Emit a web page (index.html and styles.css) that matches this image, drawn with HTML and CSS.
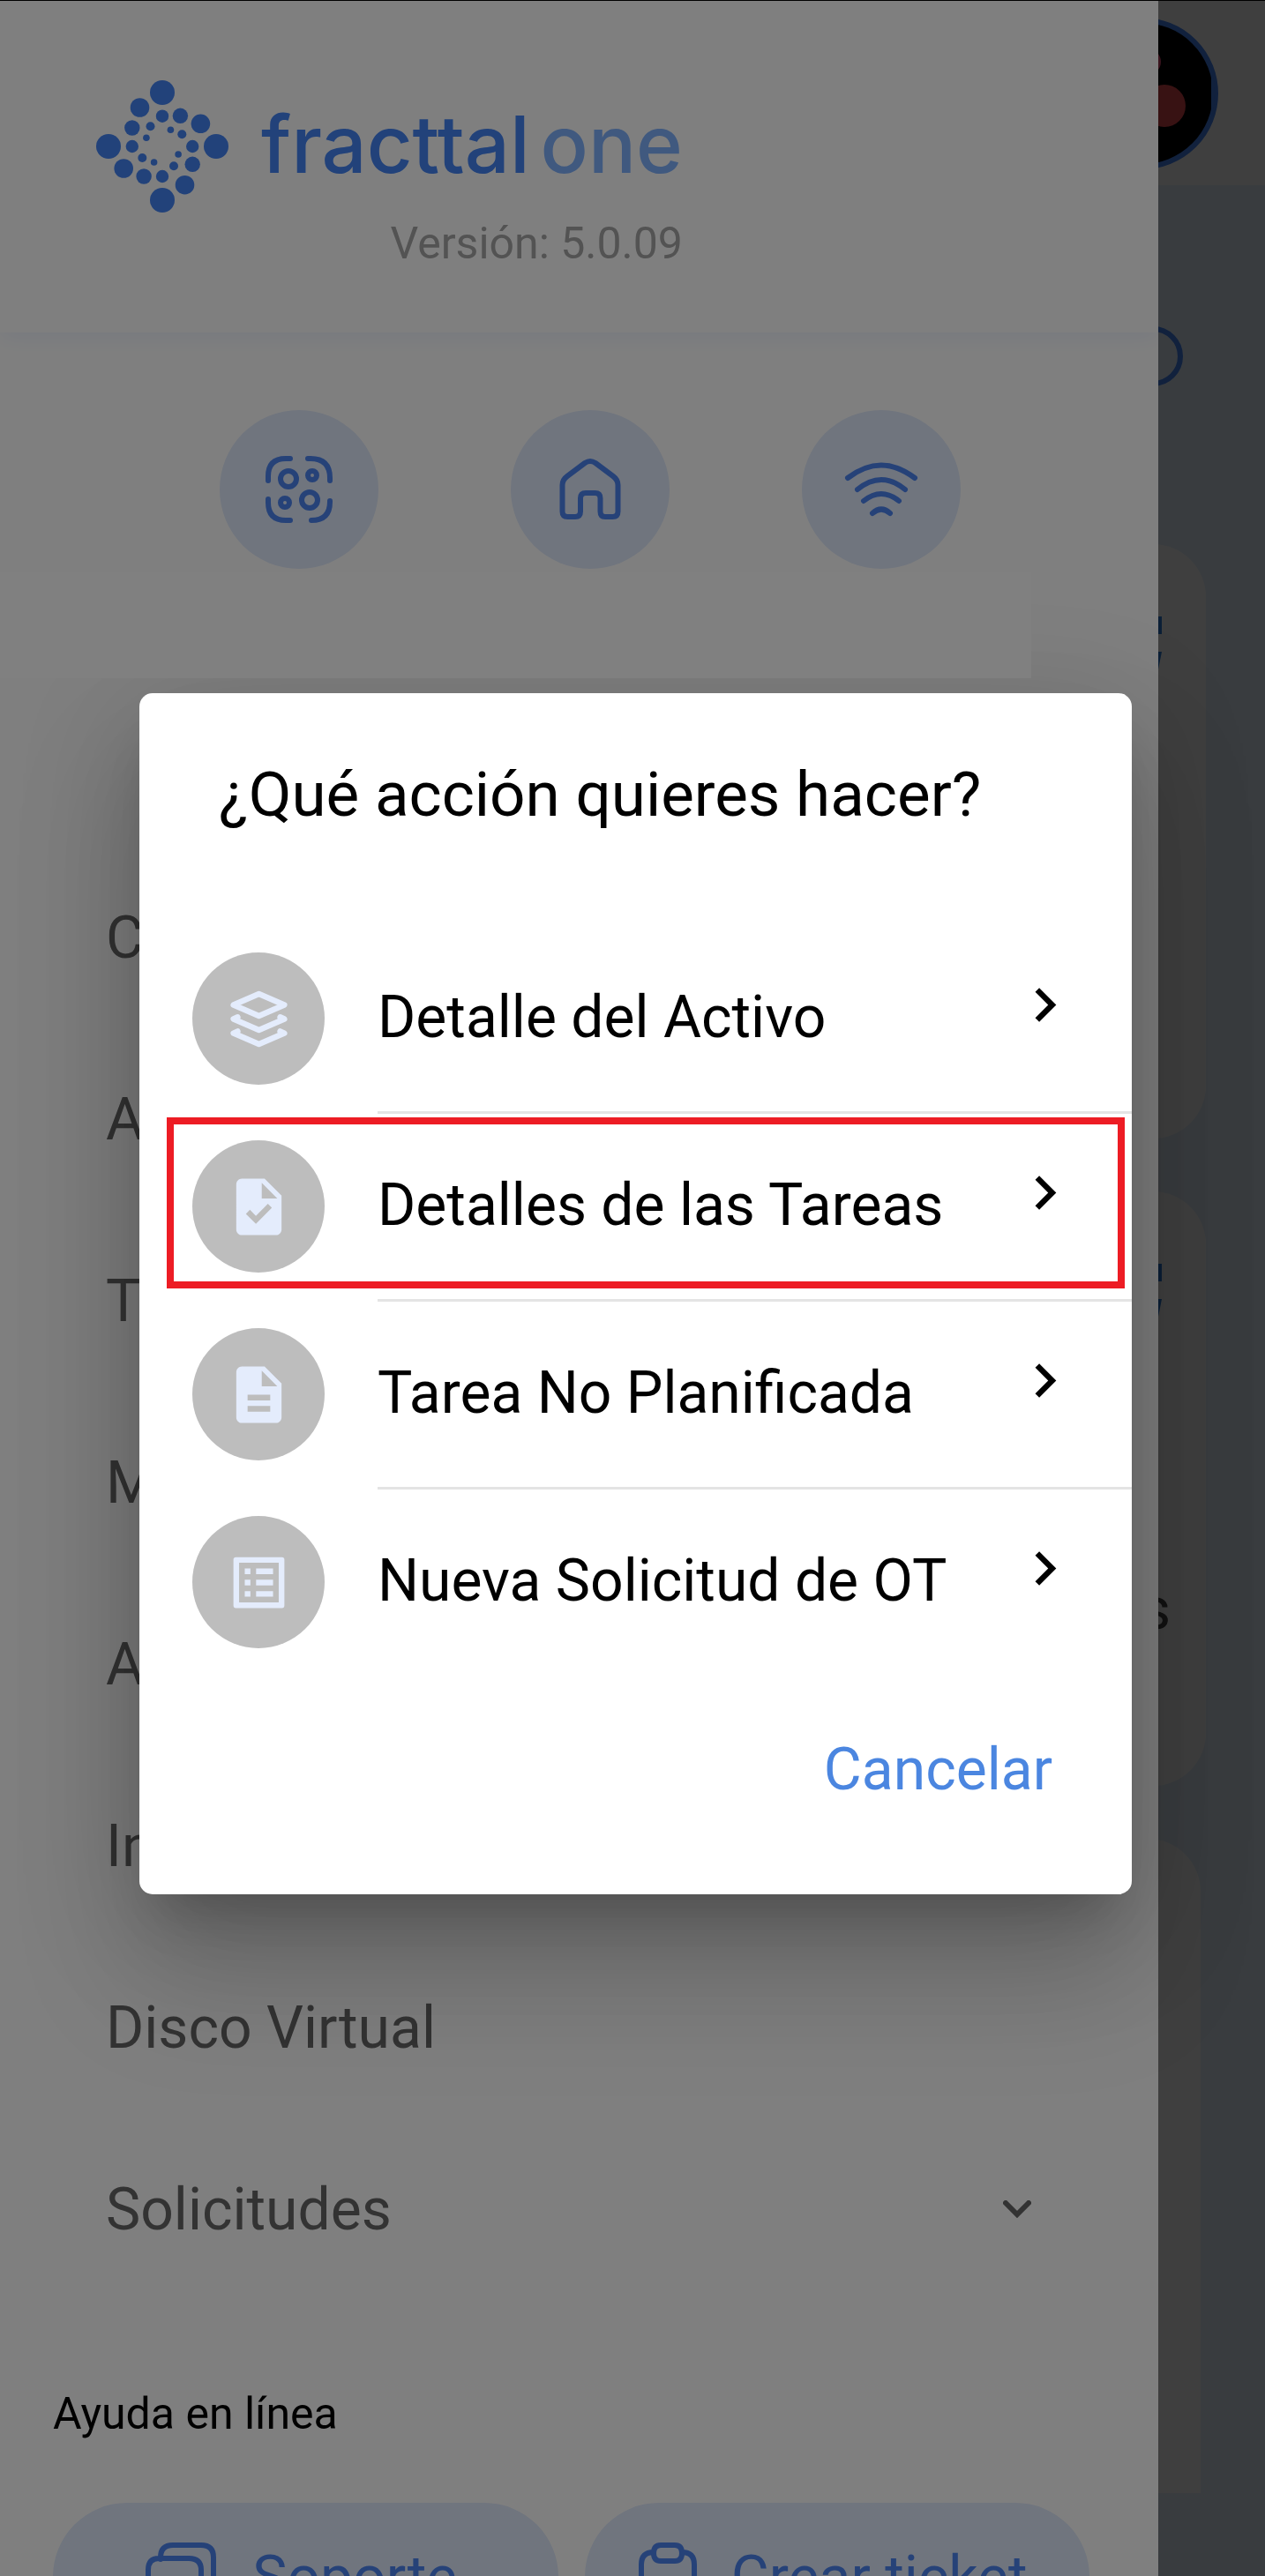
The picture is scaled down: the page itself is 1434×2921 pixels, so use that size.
FILE: index.html
```html
<!doctype html>
<html lang="es">
<head>
	<meta charset="UTF-8">
	<title>Fracttal One</title>
	<link rel="stylesheet" href="styles.css">
</head>
<body>
<div class="app">

	<!-- home -->
	<div class="home">
		<div class="home_top">
			<svg class="avatar" viewBox="0 0 172 172">
				<circle cx="86" cy="86" r="83" fill="#000" stroke="#4484f4" stroke-width="6"/>
				<path d="M164 58Q172 86 164 112Z" fill="#4484f4"/>
				<circle cx="92" cy="50" r="15" fill="#e8507a"/>
				<circle cx="111" cy="100" r="24" fill="#e0484c"/>
			</svg>
		</div>
		<div class="home_body">
			<div class="ring"></div>
			<div class="card">
				<svg class="card_icon" viewBox="0 0 40 60"><path d="M0 0h40v20H0zM0 40h40l-4 20H0z" fill="#2f7fd8"/></svg>
			</div>
			<div class="card">
				<svg class="card_icon" viewBox="0 0 40 60"><path d="M0 0h40v20H0zM0 40h40l-4 20H0z" fill="#2f7fd8"/></svg>
				<p>Pendientes</p>
			</div>
			<div class="card last"></div>
		</div>
	</div>

	<!-- menu -->
	<div class="drawer_box">
		<div class="drawer">
			<div class="drawer_top">
				<div class="logo">
					<svg class="logo_icon" viewBox="108 90 152 152" fill="#4484f4">
						<circle cx="184" cy="105" r="14"/><circle cx="123" cy="166" r="14"/><circle cx="245" cy="166" r="14"/><circle cx="184" cy="227" r="14"/>
						<circle cx="158.500" cy="122" r="10.800"/><circle cx="227.400" cy="140.300" r="10.800"/><circle cx="140.200" cy="191" r="10.800"/><circle cx="209.500" cy="209.700" r="10.800"/>
						<circle cx="204.400" cy="131.300" r="8.700"/><circle cx="149.800" cy="145" r="8.700"/><circle cx="218.200" cy="186.300" r="8.700"/><circle cx="163.100" cy="200" r="8.700"/>
						<circle cx="184" cy="131.700" r="7.200"/><circle cx="149.800" cy="166" r="7.200"/><circle cx="218.200" cy="166" r="7.200"/><circle cx="184" cy="200" r="7.200"/>
						<circle cx="170.500" cy="143.300" r="5"/><circle cx="206.300" cy="152.300" r="5"/><circle cx="161.300" cy="179" r="5"/><circle cx="197" cy="188.300" r="5"/>
						<circle cx="193.400" cy="147.300" r="3.800"/><circle cx="165.900" cy="156.300" r="3.800"/><circle cx="202.100" cy="175" r="3.800"/><circle cx="174.600" cy="184" r="3.800"/>
					</svg>
					<div class="logo_text">
						<div class="logo_name"><b>fracttal</b><span>one</span></div>
						<p>Versión: 5.0.09</p>
					</div>
				</div>
			</div>
			<div class="quick">
				<button type="button" aria-label="Escanear">
					<svg width="80" height="80" viewBox="0 0 80 80">
						<path d="M5 30V25Q5 5 25 5H30M50 5H53Q75 5 75 27V30M5 51V55Q5 75 25 75H30M54 75Q75 75 75 54V53"/>
						<circle cx="28" cy="28" r="9"/><circle cx="55" cy="24" r="5"/><circle cx="24" cy="55" r="5"/><circle cx="52" cy="52" r="9"/>
					</svg>
				</button>
				<button type="button" aria-label="Inicio">
					<svg width="72" height="72" viewBox="0 0 72 72">
						<path d="M30 6Q36 2 42 6L62 21Q67.500 25 67.500 31V61Q67.500 67 61.500 67H53Q47.500 67 47.500 61V46Q47.500 40 41.500 40H31Q25 40 25 46V61Q25 67 19 67H10.500Q4.500 67 4.500 61V31Q4.500 25 10 21Z"/>
					</svg>
				</button>
				<button type="button" aria-label="Conexión">
					<svg width="84" height="64" viewBox="0 0 84 64">
						<path d="M4 19Q42 -10 80 19M15 32Q42 10 69 32M22 45Q42 29 62 45M32 59Q42 50 52 59"/>
					</svg>
				</button>
			</div>
			<ul class="menu">
				<li><a href="#">Catálogos</a></li>
				<li><a href="#">Almacenes</a></li>
				<li><a href="#">Tareas</a></li>
				<li><a href="#">Monitoreo</a></li>
				<li><a href="#">Automatizador</a></li>
				<li><a href="#">Inteligencia</a></li>
				<li><a href="#">Disco Virtual</a></li>
				<li>
					<a href="#">Solicitudes</a>
					<svg width="32" height="20" viewBox="0 0 32 20"><path d="M3 3L16 16 29 3"/></svg>
				</li>
			</ul>
			<h2>Ayuda en línea</h2>
			<div class="help">
				<button type="button">
					<svg width="84" height="80" viewBox="0 0 84 80"><path d="M18 20V18Q18 4 32 4H64Q78 4 78 18V48Q78 60 68 60M16 19H50Q64 19 64 32V60Q64 72 52 72H16Q4 72 4 60V32Q4 19 16 19Z"/></svg>
					Soporte
				</button>
				<button type="button">
					<svg width="68" height="80" viewBox="0 0 68 80"><path d="M18 12Q4 12 4 26V62Q4 76 18 76H50Q64 76 64 62V26Q64 12 50 12M26 4H42Q50 4 50 13 50 22 42 22H26Q18 22 18 13 18 4 26 4Z"/></svg>
					Crear ticket
				</button>
			</div>
		</div>
	</div>

	<!-- dialog -->
	<div class="mask">
		<div class="dialog" role="dialog" aria-labelledby="title">
			<h1 id="title">¿Qué acción quieres hacer?</h1>
			<ul class="actions">
				<li>
					<button type="button">
						<span class="pic">
							<svg class="line" viewBox="0 0 24 24"><path d="M12 3.100L21 7 12 10.900 3 7ZM4.500 11.300L3 12 12 15.900 21 12 19.500 11.300M4.500 16.300L3 17 12 20.900 21 17 19.500 16.300"/></svg>
						</span>
						<span class="name">Detalle del Activo
							<svg class="arrow" viewBox="0 0 24 24"><path d="M10 6L8.590 7.410 13.170 12l-4.580 4.590L10 18l6-6z"/></svg>
						</span>
					</button>
				</li>
				<li class="current">
					<button type="button">
						<span class="pic">
							<svg viewBox="0 0 24 24"><path fill-rule="evenodd" d="M14 2H6c-1.100 0-2 .9-2 2v16c0 1.100.9 2 2 2h12c1.100 0 2-.9 2-2V8l-6-6zM13 3.500V9h5.500zM10.940 18L7.400 14.460l1.410-1.410 2.120 2.120 4.240-4.240 1.410 1.410z"/></svg>
						</span>
						<span class="name">Detalles de las Tareas
							<svg class="arrow" viewBox="0 0 24 24"><path d="M10 6L8.590 7.410 13.170 12l-4.580 4.590L10 18l6-6z"/></svg>
						</span>
					</button>
				</li>
				<li>
					<button type="button">
						<span class="pic">
							<svg viewBox="0 0 24 24"><path d="M14 2H6c-1.100 0-1.990.9-1.990 2L4 20c0 1.100.89 2 1.990 2H18c1.100 0 2-.9 2-2V8l-6-6zm2 16H8v-2h8v2zm0-4H8v-2h8v2zm-3-5V3.500L18.500 9H13z"/></svg>
						</span>
						<span class="name">Tarea No Planificada
							<svg class="arrow" viewBox="0 0 24 24"><path d="M10 6L8.590 7.410 13.170 12l-4.580 4.590L10 18l6-6z"/></svg>
						</span>
					</button>
				</li>
				<li>
					<button type="button">
						<span class="pic">
							<svg viewBox="0 0 24 24"><path fill-rule="evenodd" d="M3.900 3h16.200q.9 0 .9.900v16.200q0 .9-.9.900H3.900q-.9 0-.9-.900V3.900q0-.9.900-.900zM5 5v14h14V5zM11 7h6v2h-6zm0 4h6v2h-6zm0 4h6v2h-6zM7 7h2v2H7zm0 4h2v2H7zm0 4h2v2H7z"/></svg>
						</span>
						<span class="name">Nueva Solicitud de OT
							<svg class="arrow" viewBox="0 0 24 24"><path d="M10 6L8.590 7.410 13.170 12l-4.580 4.590L10 18l6-6z"/></svg>
						</span>
					</button>
				</li>
			</ul>
			<div class="dialog_foot">
				<button type="button">Cancelar</button>
			</div>
		</div>
	</div>

</div>
</body>
</html>
```

FILE: styles.css
```css
*{
	margin:0;
	padding:0;
	box-sizing:border-box;
}
body{
	font-family:Roboto,"Liberation Sans",sans-serif;
	color:#000;
}
ul{
	list-style:none;
}
a{
	color:inherit;
	text-decoration:none;
}
button{
	font:inherit;
	color:inherit;
	border:0;
	background:none;
	cursor:pointer;
}
h1,h2{
	font-weight:400;
}
.app{
	position:relative;
	height:100vh;
	overflow:hidden;
	border-top:1px solid #000;
}

/* home */
.home{
	min-height:100%;
	background:#e4f2ff;
}
.home_top{
	display:flex;
	justify-content:flex-end;
	height:209px;
	padding:19px 53px 0 0;
	background:#fff;
}
.avatar{
	width:172px;
	height:172px;
}
.home_body{
	display:flex;
	flex-direction:column;
	gap:60px;
	padding:160px 67px 0 60px;
}
.ring{
	align-self:flex-end;
	width:68px;
	height:68px;
	margin:0 26px 119px 0;
	border:6px solid #4484f4;
	border-radius:50%;
}
.card{
	display:flex;
	flex-direction:column;
	align-items:flex-end;
	height:674px;
	padding:82px 40px;
	border-radius:60px;
	background:#fff;
	color:#444;
	font-size:66px;
}
.card_icon{
	width:40px;
	height:60px;
	margin-right:10px;
}
.card p{
	margin-top:292px;
	line-height:80px;
}
.last{
	height:742px;
	margin-right:6px;
	border-radius:60px 60px 0 0;
}

/* menu */
.drawer_box{
	position:absolute;
	top:0;
	left:0;
	width:100%;
	height:100%;
	padding-right:121px;
	background:rgba(0,0,0,.5);
}
.drawer{
	height:100%;
	overflow:hidden;
	background:#fff;
}
.drawer_top{
	height:376px;
	padding:89px 108px 0;
	box-shadow:0 6px 24px #eef3ff;
}
.logo{
	display:flex;
	gap:36px;
}
.logo_icon{
	width:152px;
	height:152px;
}
.logo_text{
	color:#a6a6a6;
	font-size:50px;
	line-height:60px;
	text-align:right;
}
.logo_name{
	display:flex;
	gap:12px;
	margin:44px 0 52px;
	color:#4484f4;
	font-family:Inter,sans-serif;
	font-size:90px;
	font-weight:500;
}
.logo_name b{
	font-weight:500;
}
.logo_name span{
	color:#80b2fe;
}
.quick{
	display:flex;
	gap:150px;
	padding:88px 249px 0;
}
.quick button{
	display:flex;
	align-items:center;
	justify-content:center;
	flex:none;
	width:180px;
	height:180px;
	border-radius:50%;
	background:#e0eafc;
}
.quick svg,.help svg{
	fill:none;
	stroke:#4c84f0;
	stroke-width:6px;
	stroke-linecap:round;
	stroke-linejoin:round;
}
.menu{
	padding:315px 144px 0 120px;
	color:#666;
	font-size:66px;
}
.menu li{
	display:flex;
	align-items:center;
	justify-content:space-between;
	height:206px;
}
.menu svg{
	width:32px;
	height:20px;
	fill:none;
	stroke:#666;
	stroke-width:6px;
	stroke-linecap:round;
}
.drawer h2{
	padding:99px 60px 71px;
	font-size:50px;
	line-height:60px;
}
.help{
	display:grid;
	grid-template-columns:1fr 1fr;
	gap:30px;
	padding:0 78px 0 60px;
}
.help button{
	display:flex;
	align-items:center;
	justify-content:center;
	gap:38px;
	height:168px;
	padding-right:10px;
	border-radius:84px;
	background:#e0eafc;
	color:#4c84f0;
	font-size:66px;
}

/* dialog */
.mask{
	position:absolute;
	top:0;
	left:0;
	width:100%;
	height:100%;
	padding:785px 151px 0 158px;
	background:rgba(0,0,0,.5);
}
.dialog{
	position:relative;
	padding:60px 0 96px;
	border-radius:15px;
	background:#fff;
	box-shadow:0 41px 56px -26px rgba(0,0,0,.2),0 90px 142px 11px rgba(0,0,0,.14),0 34px 140px 8px rgba(0,0,0,.14);
}
/* keeps the shadow off the menu area above the dialog */
.dialog:before{
	content:"";
	position:absolute;
	left:-158px;
	right:114px;
	bottom:100%;
	height:120px;
	margin-bottom:17px;
	background:#808080;
}
.dialog h1{
	padding:0 90px;
	font-size:71px;
	line-height:110px;
}
.actions{
	padding-top:94px;
	font-size:66px;
}
.actions li{
	position:relative;
}
.actions button{
	display:flex;
	align-items:flex-start;
	gap:60px;
	width:100%;
	padding-left:60px;
	text-align:left;
}
.pic{
	display:flex;
	align-items:center;
	justify-content:center;
	width:150px;
	height:150px;
	margin-top:30px;
	border-radius:50%;
	background:#bdbdbd;
}
.pic svg{
	width:77px;
	height:77px;
	fill:#e4ecfc;
}
.pic .line{
	fill:none;
	stroke:#e4ecfc;
	stroke-width:2px;
	stroke-linecap:round;
	stroke-linejoin:round;
}
.name{
	display:flex;
	flex:1;
	justify-content:space-between;
	height:213px;
	padding:0 60px 0 0;
	border-bottom:3px solid #e4e4e4;
	line-height:208px;
}
.actions li:last-child .name{
	border-color:transparent;
}
.arrow{
	width:77px;
	height:77px;
	margin-top:51px;
}
.current:after{
	content:"";
	position:absolute;
	top:4px;
	left:31px;
	right:8px;
	height:194px;
	box-sizing:border-box;
	border:8px solid #ed1c24;
}
.dialog_foot{
	display:flex;
	justify-content:flex-end;
	padding:60px 90px 0;
	color:#4b86e0;
	font-size:66px;
	line-height:90px;
}
```
